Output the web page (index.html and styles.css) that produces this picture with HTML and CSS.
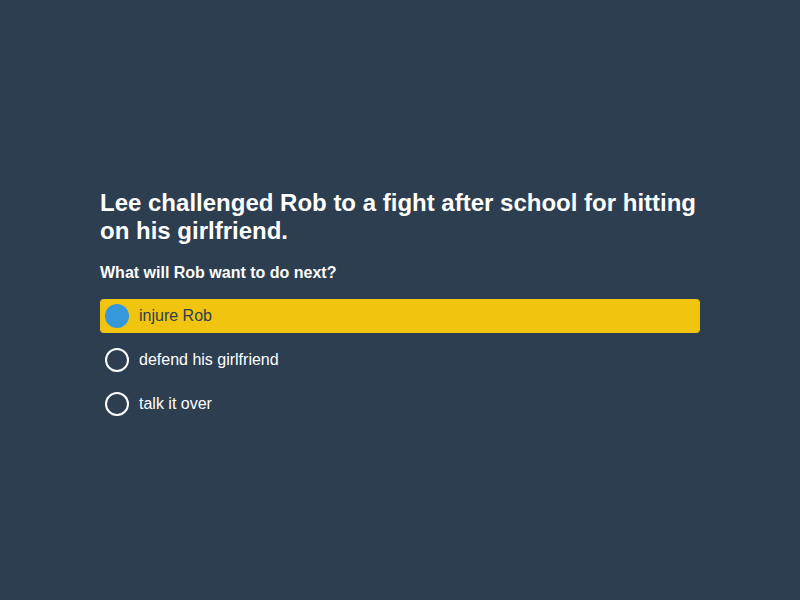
FILE: index.html
```html
<!DOCTYPE html>
<html>
<head>
<meta charset="utf-8">
<link rel="stylesheet" href="styles.css">
</head>
<body>
<div class="page">
  <div class="quiz">
    <h1 class="title">Lee challenged Rob to a fight after school for hitting on his girlfriend.</h1>
    <p class="question">What will Rob want to do next?</p>
    <div class="options">
      <div class="option selected"><span class="radio"></span><span class="label">injure Rob</span></div>
      <div class="option"><span class="radio"></span><span class="label">defend his girlfriend</span></div>
      <div class="option"><span class="radio"></span><span class="label">talk it over</span></div>
    </div>
  </div>
</div>
</body>
</html>
```
FILE: styles.css
```css
html, body {
  margin: 0;
  padding: 0;
  background: #2c3e50;
  font-family: "Liberation Sans", Arial, sans-serif;
  color: #ffffff;
}
.page {
  box-sizing: border-box;
  height: 600px;
  padding-top: 9px;
  display: flex;
  align-items: center;
  justify-content: center;
}
.quiz {
  width: 600px;
}
.title {
  font-size: 24px;
  font-weight: bold;
  line-height: 28px;
  margin: 0 0 18px 0;
}
.question {
  font-size: 16px;
  font-weight: bold;
  margin: 0 0 16px 0;
  line-height: 20px;
}
.options {
  display: flex;
  flex-direction: column;
  gap: 10px;
}
.option {
  display: flex;
  align-items: center;
  gap: 10px;
  height: 34px;
  padding-left: 5px;
  border-radius: 4px;
  font-size: 16px;
}
.option.selected {
  background: #f1c40f;
  color: #2c3e50;
}
.radio {
  width: 20px;
  height: 20px;
  border: 2px solid #ffffff;
  border-radius: 50%;
  box-sizing: content-box;
}
.option.selected .radio {
  background: #3498db;
  border-color: #3498db;
}
```
